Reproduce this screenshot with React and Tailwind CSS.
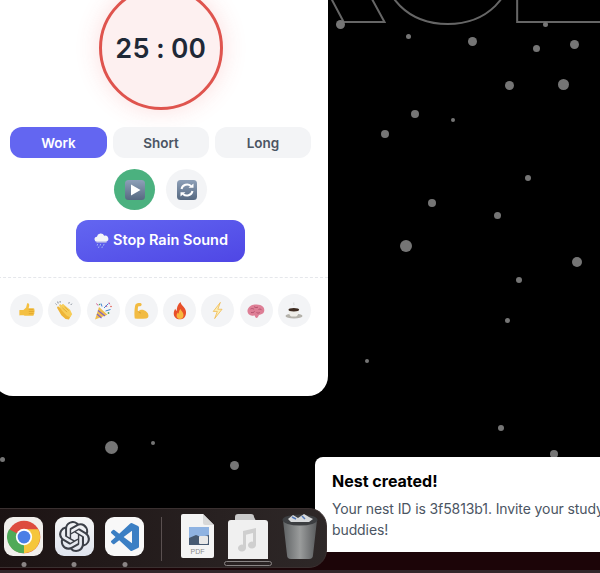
import { SiOpenai } from 'react-icons/si';

const dots = [
  [340, 24, 9], [408, 36, 5], [472, 41, 9], [536, 48, 7], [574, 44, 9], [545, 24, 5],
  [509, 85, 9], [563, 84, 11], [415, 114, 8], [453, 120, 4], [385, 134, 8], [528, 178, 6],
  [432, 203, 8], [497, 215, 7], [406, 246, 12], [577, 262, 10], [519, 280, 6], [507, 320, 5],
  [367, 361, 4], [501, 428, 6], [111, 447, 13], [153, 443, 4], [234, 465, 9], [2, 459, 5],
  [554, 454, 8],
];

function Thumb() {
  return (
    <svg viewBox="0 0 20 20" className="w-[18px] h-[18px]">
      <path d="M2 9h4l3-3 1.200-4.600c1.800-.5 2.600 1 2.200 3L11.800 7H17c1.400 0 1.600 1.200 1 2 .8.600.7 1.700 0 2.300.5.700.4 1.700-.4 2.100.3.900-.2 2-1.400 2H8c-1 0-1.400-.8-2-.8H2.600C1.800 15.600 1.500 15 1.500 14v-3.600C1.500 9.600 1.600 9 2 9z" fill="#f4c042" />
      <path d="M12 10.500h5.600M12 13h5M12 8.200h5" stroke="#d99a22" strokeWidth=".7" fill="none" />
    </svg>
  );
}

function Clap() {
  return (
    <svg viewBox="0 0 20 20" className="w-[21px] h-[21px]">
      <path d="M3 7.500c-.4-1 .8-1.800 1.600-1.100l2 1.600-.8-1.800c-.3-1 .9-1.700 1.700-1l6.500 5.500 2 4-1.700 3.800-3.300-.5-4-3.500z" fill="#eeb436" />
      <path d="M5 5.500c-.4-1 .8-1.800 1.600-1.100l1 .8c-.3-1 .9-1.700 1.700-1l6 5 2 4.300-1.900 3-3-1.200-5-5.300z" fill="#f7cd58" />
      <path d="M8 7.500l4.500 4M10 6.500l4 3.600" stroke="#d99a22" strokeWidth=".6" fill="none" />
      <path d="M3.500 1.500l.5 1.800M5.800 1l.1 1.500M14.500 2l-.4 1.500M17 3.500l-1 1.200M1.500 3.500l1 1" stroke="#55606e" strokeWidth=".7" />
    </svg>
  );
}

function Popper() {
  return (
    <svg viewBox="0 0 20 20" className="w-[20px] h-[20px]">
      <path d="M2 18.500l4-12.500 8.500 7.800z" fill="#eebd4c" />
      <path d="M4 13l4.500 4M5 9.500l7 5.500" stroke="#7d5fc6" strokeWidth="1.100" />
      <path d="M8 2.500l1 3M11 7l4.500-4.500M12.500 10l5-1.500" stroke="#3f84d6" strokeWidth="1" fill="none" />
      <path d="M3.500 2.500l1.500 2M16 1.500l.8 1.800M13 4.500l1 1.500" stroke="#d9568e" strokeWidth="1" />
      <circle cx="15.500" cy="12" r=".9" fill="#4aa564" /><circle cx="18" cy="5.500" r=".8" fill="#e0574c" /><circle cx="6.500" cy="3.500" r=".8" fill="#4aa564" />
    </svg>
  );
}

function Muscle() {
  return (
    <svg viewBox="0 0 20 20" className="w-[20px] h-[20px]">
      <path d="M4.500 3.500C6 2.200 9 1.700 10.200 2.500c.8.600.5 2-.4 2.400-.8.300-2 .1-2.600.5-.5 1.500-.5 3.300-.2 5 1.400-1.400 3.900-2 6-1.200 2.200.8 4.200 2.600 4.400 5 .2 1.700-.5 3-2.200 3.200-3.800.5-8 .6-11.400.1C3.300 14 3.200 7.500 4.500 3.500z" fill="#f2bb42" />
      <path d="M7.300 10.500c.6 1 1.500 1.500 2.500 1.500" stroke="#c98d22" strokeWidth=".7" fill="none" />
    </svg>
  );
}

function Fire() {
  return (
    <svg viewBox="0 0 20 20" className="w-[20px] h-[20px]">
      <path d="M10.500 1c.5 3 3 4.300 4.500 6.800 1.700 2.900 1.300 7-1 9.200-2.200 1.800-6.400 1.800-8.500-.2C3 14.500 3.400 10.300 5.300 7.800c.2 1 .7 1.800 1.500 2.200C6.500 6.500 8 3 10.500 1z" fill="#e8502a" />
      <path d="M10.500 8c.3 1.800 2.900 3 3 6 .1 2.500-1.600 4-3.600 4-2 0-3.400-1.500-3.300-3.500.1-1.400.8-2.300 1.400-3 .2.600.4 1 .9 1.200C8.700 11 9.200 9.200 10.500 8z" fill="#f8b73e" />
    </svg>
  );
}

function Bolt() {
  return (
    <svg viewBox="0 0 20 20" className="w-[19px] h-[19px]">
      <path d="M13 1.500L5.500 11h4.300L7 18.500l7.800-9.800h-4.500z" fill="#fdeeb5" stroke="#efb84a" strokeWidth=".8" strokeLinejoin="round" />
    </svg>
  );
}

function Brain() {
  return (
    <svg viewBox="0 0 20 20" className="w-[20px] h-[20px]">
      <path d="M1.500 10.500C1.200 7.500 4 4.500 7.500 3.800c3.500-.8 7.500-.3 9.500 2 1.800 2 1.700 5.200-.2 6.700-1.300 1-3 1-4 1.700-.6 1.700-1.500 3-2.500 2.800-1-.2-1.200-1.400-1.600-2.400-2.800.6-6.700-.4-7.200-4.100z" fill="#de7f96" />
      <path d="M4.500 8c1.300-.8 2.700-.5 3.600.4M8 5.500c1 1.200 2.800 1.400 4 .6M12.500 8.500c1.200-.8 2.600-.4 3.200.6M5 11.500c1.500.4 3-.1 3.600-1.100M10.500 11.500c1 .8 2.500.7 3.300 0" stroke="#a94a66" strokeWidth=".8" fill="none" />
    </svg>
  );
}

function Coffee() {
  return (
    <svg viewBox="0 0 20 20" className="w-[20px] h-[20px]">
      <ellipse cx="10" cy="15" rx="8.500" ry="2.600" fill="#b4b2ab" />
      <path d="M4.500 8.500h10.500c0 3.500-1.300 6.800-3 7H7.500c-1.800-.2-3-3.500-3-7z" fill="#efeee9" />
      <ellipse cx="9.800" cy="8.700" rx="5.300" ry="1.700" fill="#3d2a20" />
      <path d="M9.800 1.500c-.6 1 .6 1.500 0 2.800" stroke="#c7c7c7" strokeWidth=".7" fill="none" />
    </svg>
  );
}

const reactions = [Thumb, Clap, Popper, Muscle, Fire, Bolt, Brain, Coffee];

function KeyPlay() {
  return (
    <svg viewBox="0 0 20 20" className="w-[20px] h-[20px]">
      <defs>
        <linearGradient id="keyA" x1="0" y1="0" x2="0" y2="1">
          <stop offset="0" stopColor="#8ea0b8" />
          <stop offset="1" stopColor="#566981" />
        </linearGradient>
      </defs>
      <rect x="0" y="0" width="20" height="20" rx="3.500" fill="url(#keyA)" />
      <path d="M6 4.500l9.500 5.500L6 15.500z" fill="#fff" />
    </svg>
  );
}

function KeyRefresh() {
  return (
    <svg viewBox="0 0 20 20" className="w-[20px] h-[20px]">
      <defs>
        <linearGradient id="keyB" x1="0" y1="0" x2="0" y2="1">
          <stop offset="0" stopColor="#8ea0b8" />
          <stop offset="1" stopColor="#566981" />
        </linearGradient>
      </defs>
      <rect x="0" y="0" width="20" height="20" rx="3.500" fill="url(#keyB)" />
      <path d="M4.500 9a5.700 5.700 0 0 1 9.500-3" stroke="#fff" strokeWidth="2" fill="none" />
      <path d="M15.500 11a5.700 5.700 0 0 1-9.500 3" stroke="#fff" strokeWidth="2" fill="none" />
      <path d="M11.500 7.800h5V3.500zM8.500 12.200h-5v4.300z" fill="#fff" />
    </svg>
  );
}

function RainCloud() {
  return (
    <svg viewBox="0 0 20 20" className="w-[17px] h-[17px]">
      <path d="M5 11.500a3 3 0 0 1-.4-6 4.500 4.500 0 0 1 8.600-1 3.600 3.600 0 0 1 2.300 7z" fill="#f3f4f8" />
      <path d="M4 12h12" stroke="#c9cce0" strokeWidth="1" />
      <path d="M5.500 14l-.6 2M9 14l-.6 2M13 14l-.6 2M7 17l-.5 1.800M11 17l-.5 1.800" stroke="#a9c4f2" strokeWidth="1" />
    </svg>
  );
}

function ChromeIcon() {
  return (
    <div className="w-[39px] h-[39px] rounded-[9px] bg-[#f1efec] flex items-center justify-center shrink-0">
      <svg viewBox="0 0 48 48" className="w-[34px] h-[34px]">
        <circle cx="24" cy="24" r="23" fill="#dd4b3e" />
        <path d="M24 24 L44 13 A23 23 0 0 1 24 47z" fill="#f5c63c" />
        <path d="M24 24 L24 47 A23 23 0 0 1 3 13z" fill="#4faa58" />
        <path d="M24 13 H44 L34 24z" fill="#f5c63c" />
        <circle cx="24" cy="24" r="11.500" fill="#fff" />
        <circle cx="24" cy="24" r="9" fill="#4a7fe6" />
      </svg>
    </div>
  );
}

function ChatgptIcon() {
  return (
    <div className="w-[39px] h-[39px] rounded-[9px] bg-gradient-to-b from-[#f6f6f6] to-[#dfe4ee] flex items-center justify-center shrink-0">
      <SiOpenai className="w-[31px] h-[31px] text-[#3c4048]" />
    </div>
  );
}

function VscodeIcon() {
  return (
    <div className="w-[39px] h-[39px] rounded-[9px] bg-[#f8f8f8] flex items-center justify-center shrink-0">
      <svg viewBox="0 0 24 24" className="w-[28px] h-[28px]">
        <path d="M23.15 2.587L18.21.21a1.494 1.494 0 0 0-1.705.29l-9.46 8.63-4.12-3.128a.999.999 0 0 0-1.276.057L.327 7.261A1 1 0 0 0 .326 8.74L3.899 12 .326 15.26a1 1 0 0 0 .001 1.479L1.65 17.94a.999.999 0 0 0 1.276.057l4.12-3.128 9.46 8.63a1.492 1.492 0 0 0 1.704.29l4.942-2.377A1.5 1.5 0 0 0 24 20.06V3.939a1.5 1.5 0 0 0-.85-1.352zm-5.146 14.861L10.826 12l7.178-5.448v10.896z" fill="#3b7fc4" />
      </svg>
    </div>
  );
}

function PdfIcon() {
  return (
    <div className="relative w-[33px] h-[44px] shrink-0">
      <svg viewBox="0 0 33 44" className="absolute inset-0 w-full h-full">
        <path d="M0 2a2 2 0 0 1 2-2h20l11 11v31a2 2 0 0 1-2 2H2a2 2 0 0 1-2-2z" fill="#f4f4f4" />
        <path d="M22 0l11 11h-9a2 2 0 0 1-2-2z" fill="#d8d8d8" />
        <rect x="8" y="13" width="20" height="14" fill="#8fb3e2" />
        <path d="M8 24l7-3 5 2 8-2v10H8z" fill="#475a72" />
        <rect x="18" y="22" width="9" height="8" rx="1" fill="#e8e8e8" />
      </svg>
      <span className="absolute left-0 right-0 top-[33px] text-center text-[7px] leading-[9px] text-[#8a8a8a] font-['Liberation_Sans',sans-serif]">PDF</span>
    </div>
  );
}

function MusicFolder() {
  return (
    <svg viewBox="0 0 40 45" className="w-[40px] h-[45px] shrink-0">
      <path d="M7 7V3a3 3 0 0 1 3-3h13a3 3 0 0 1 3 3l2 4z" fill="#c9c9c9" />
      <path d="M0 9a3 3 0 0 1 3-3h34a3 3 0 0 1 3 3v36H0z" fill="#f0f0f0" />
      <path d="M15 17l13-3v17a4 3.500 0 1 1-3-3.300V19l-7 1.700V34a4 3.500 0 1 1-3-3.300z" fill="#cfcfcf" />
    </svg>
  );
}

function TrashIcon() {
  return (
    <svg viewBox="0 0 36 45" className="w-[36px] h-[45px] shrink-0">
      <defs>
        <linearGradient id="bin" x1="0" y1="0" x2="1" y2="0">
          <stop offset="0" stopColor="#5e6163" />
          <stop offset=".5" stopColor="#9a9c9c" />
          <stop offset="1" stopColor="#585a5c" />
        </linearGradient>
      </defs>
      <path d="M1 6h34l-4 35a4 4 0 0 1-4 4H9a4 4 0 0 1-4-4z" fill="url(#bin)" />
      <ellipse cx="18" cy="6" rx="17.500" ry="5.500" fill="#3c3e41" />
      <path d="M6 5l5-4 5 3 6-4 5 3 4 2-4 3H9z" fill="#d8dadc" />
      <path d="M10 3l4 2M20 2l3 3" stroke="#5278b8" strokeWidth="1.500" />
    </svg>
  );
}

function AppDot({ children }) {
  return (
    <div className="relative">
      {children}
      <span className="absolute left-1/2 -translate-x-1/2 top-[45px] w-[5px] h-[5px] rounded-full bg-[#8a8585]" />
    </div>
  );
}

export default function App() {
  return (
    <div className="relative w-[600px] h-[573px] overflow-hidden bg-black font-['Inter',sans-serif]">
      {/* faint outlined title behind the card */}
      <div className="absolute left-[260px] top-[-142px] text-[190px] leading-[190px] font-black tracking-[-6px] whitespace-nowrap text-transparent [-webkit-text-stroke:2px_#666666] font-['Inter',sans-serif]">
        <span className="mr-[-7px]">R</span>
        <span className="mr-[-7px]">O</span>
        <span>E</span>
      </div>

      {dots.map(([x, y, d], i) => (
        <span
          key={i}
          className="absolute rounded-full bg-[#757575]"
          style={{ left: x - d / 2, top: y - d / 2, width: d, height: d }}
        />
      ))}

      {/* timer card */}
      <div className="relative z-10 -ml-[7px] -mt-[40px] w-[335px] h-[436px] bg-white rounded-b-[20px] px-[17px] pt-[26px] flex flex-col items-stretch">
        <div className="self-center w-[124px] h-[124px] rounded-full bg-[#fdf0f0] border-[3px] border-[#df544e] shadow-[0_0_24px_rgba(239,68,68,0.18)] flex items-center justify-center">
          <span className="pt-[2px] text-[27px] font-semibold tabular-nums text-[#1f2937] flex items-center">
            25<span className="inline-block w-[21px] text-center">:</span>00
          </span>
        </div>

        <div className="mt-[17px] flex gap-[6px] h-[31px] text-[13.500px] font-semibold">
          <button className="w-[97px] pt-[1px] rounded-[12px] bg-[#6366f1] text-white">Work</button>
          <button className="w-[96px] pt-[1px] rounded-[12px] bg-[#f3f4f6] text-[#4b5563]">Short</button>
          <button className="w-[96px] pt-[1px] rounded-[12px] bg-[#f3f4f6] text-[#4b5563]">Long</button>
        </div>

        <div className="mt-[11px] flex justify-center gap-[11px]">
          <button className="w-[41px] h-[41px] rounded-full bg-[#4bb17f] flex items-center justify-center"><KeyPlay /></button>
          <button className="w-[41px] h-[41px] rounded-full bg-[#f3f4f6] flex items-center justify-center"><KeyRefresh /></button>
        </div>

        <button className="mt-[10px] self-center w-[169px] h-[42px] pb-[2px] rounded-[12px] bg-gradient-to-br from-[#6366f1] to-[#4f46e5] text-white text-[14.500px] font-semibold flex items-center justify-center gap-[3px]">
          <RainCloud />
          Stop Rain Sound
        </button>

        <div className="-mx-[17px] mt-[15px] border-t border-dashed border-[#e5e7eb]" />

        <div className="mt-[16px] flex justify-between">
          {reactions.map((Icon, i) => (
            <div key={i} className="w-[33px] h-[33px] rounded-full bg-[#f3f4f6] flex items-center justify-center">
              <Icon />
            </div>
          ))}
        </div>
      </div>

      {/* strip behind the dock */}
      <div className="absolute left-0 right-0 bottom-0 h-[21px] bg-[#1c0508] border-b-[3px] border-[#33262a]" />

      {/* toast */}
      <div className="absolute z-20 left-[315px] top-[457px] w-[320px] h-[95px] bg-white rounded-tl-[8px] pl-[17px] pt-[14px]">
        <p className="text-[16px] leading-[20px] font-bold text-black">Nest created!</p>
        <p className="mt-[7px] w-[290px] text-[14px] leading-[21px] tracking-[-0.1px] text-[#4b5563]">
          Your nest ID is 3f5813b1. Invite your study buddies!
        </p>
      </div>

      {/* dock */}
      <div className="absolute z-30 left-[-20px] top-[508px] w-[347px] h-[60px] rounded-[18px] bg-gradient-to-r from-[#1b1212] to-[#2e2828] border border-[#3a3030] flex items-start">
        <div className="ml-[23px] mt-[8px] flex gap-[11.500px]">
          <AppDot><ChromeIcon /></AppDot>
          <AppDot><ChatgptIcon /></AppDot>
          <AppDot><VscodeIcon /></AppDot>
        </div>
        <div className="ml-[17px] mt-[8px] w-px h-[44px] bg-[#5a5050]" />
        <div className="ml-[19px] mt-[5px] flex gap-[14px]">
          <PdfIcon />
          <div className="relative">
            <MusicFolder />
            <span className="absolute left-[-4px] top-[47px] w-[48px] h-[5px] rounded-full border border-[#8a8585]" />
          </div>
          <TrashIcon />
        </div>
      </div>
    </div>
  );
}
